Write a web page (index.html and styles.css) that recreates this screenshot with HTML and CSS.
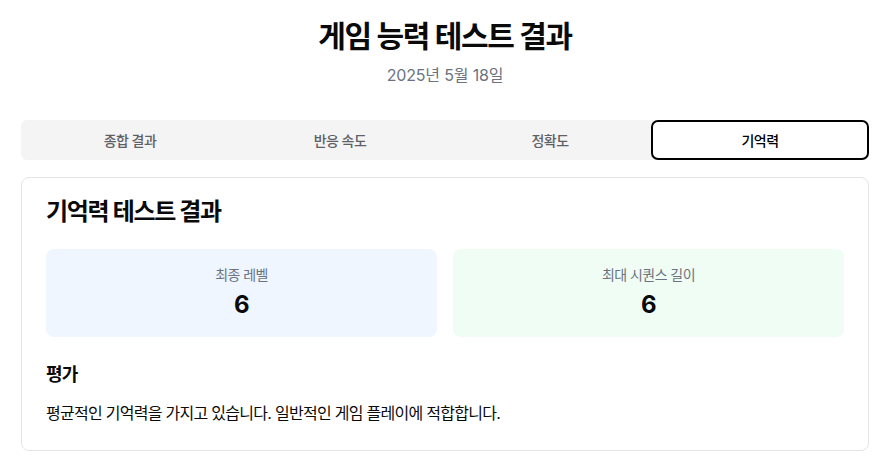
FILE: index.html
```html
<!DOCTYPE html>
<html lang="ko">
<head>
    <meta charset="UTF-8">
    <meta name="viewport" content="width=device-width, initial-scale=1.0">
    <title>게임 능력 테스트 결과</title>
    <link rel="stylesheet" href="styles.css">
</head>
<body>
    <div class="page">
        <header class="page-header">
            <h1>게임 능력 테스트 결과</h1>
            <p class="date">2025년 5월 18일</p>
        </header>

        <div class="tabs">
            <button class="tab">종합 결과</button>
            <button class="tab">반응 속도</button>
            <button class="tab">정확도</button>
            <button class="tab active">기억력</button>
        </div>

        <div class="card">
            <h2 class="card-title">기억력 테스트 결과</h2>
            <div class="stats">
                <div class="stat blue">
                    <div class="stat-label">최종 레벨</div>
                    <div class="stat-value">6</div>
                </div>
                <div class="stat green">
                    <div class="stat-label">최대 시퀀스 길이</div>
                    <div class="stat-value">6</div>
                </div>
            </div>
            <h3 class="section-title">평가</h3>
            <p class="section-text">평균적인 기억력을 가지고 있습니다. 일반적인 게임 플레이에 적합합니다.</p>
        </div>
    </div>
</body>
</html>
```

FILE: styles.css
```css
* {
    box-sizing: border-box;
}

body {
    margin: 0;
    font-family: Inter, "Noto Sans CJK KR", sans-serif;
    color: #0a0a0a;
    background-color: #fff;
    letter-spacing: -0.045em;
}

.page {
    padding: 18px 17px 0 21px;
}

.page-header {
    text-align: center;
    margin-bottom: 33px;
}

.page-header h1 {
    margin: 0 0 9px;
    font-size: 30px;
    line-height: 36px;
    font-weight: 700;
    letter-spacing: -0.045em;
}

.date {
    margin: 0;
    font-size: 16px;
    line-height: 24px;
    color: #6b7280;
    letter-spacing: -0.01em;
}

.tabs {
    display: grid;
    grid-template-columns: repeat(4, 1fr);
    height: 40px;
    padding: 0 4px;
    background-color: #f4f4f5;
    border-radius: 6px;
}

.tab {
    font-family: inherit;
    font-size: 14px;
    font-weight: 500;
    letter-spacing: -0.04em;
    color: #5f5f66;
    background: none;
    border: 2px solid transparent;
    border-radius: 7px;
    cursor: pointer;
}

.tab.active {
    margin: 0 -4px;
    background-color: #fff;
    border-color: #000;
    color: #000;
}

.card {
    margin-top: 17px;
    border: 1px solid #e4e4e7;
    border-radius: 8px;
    padding: 21px 24px 25px;
}

.card-title {
    margin: 0 0 24px;
    font-size: 24px;
    line-height: 26px;
    font-weight: 700;
    letter-spacing: -0.055em;
}

.stats {
    display: grid;
    grid-template-columns: 1fr 1fr;
    gap: 16px;
}

.stat {
    padding: 16px;
    border-radius: 8px;
    text-align: center;
}

.stat.blue {
    background-color: #eff6ff;
}

.stat.green {
    background-color: #f0fdf4;
}

.stat-label {
    font-size: 14px;
    line-height: 20px;
    color: #6b7280;
    margin-bottom: 4px;
    letter-spacing: -0.04em;
}

.stat-value {
    font-size: 24px;
    line-height: 32px;
    font-weight: 700;
}

.section-title {
    margin: 24px 0 12px;
    font-size: 18px;
    line-height: 28px;
    font-weight: 700;
}

.section-text {
    margin: 0;
    font-size: 16px;
    line-height: 24px;
}
```
